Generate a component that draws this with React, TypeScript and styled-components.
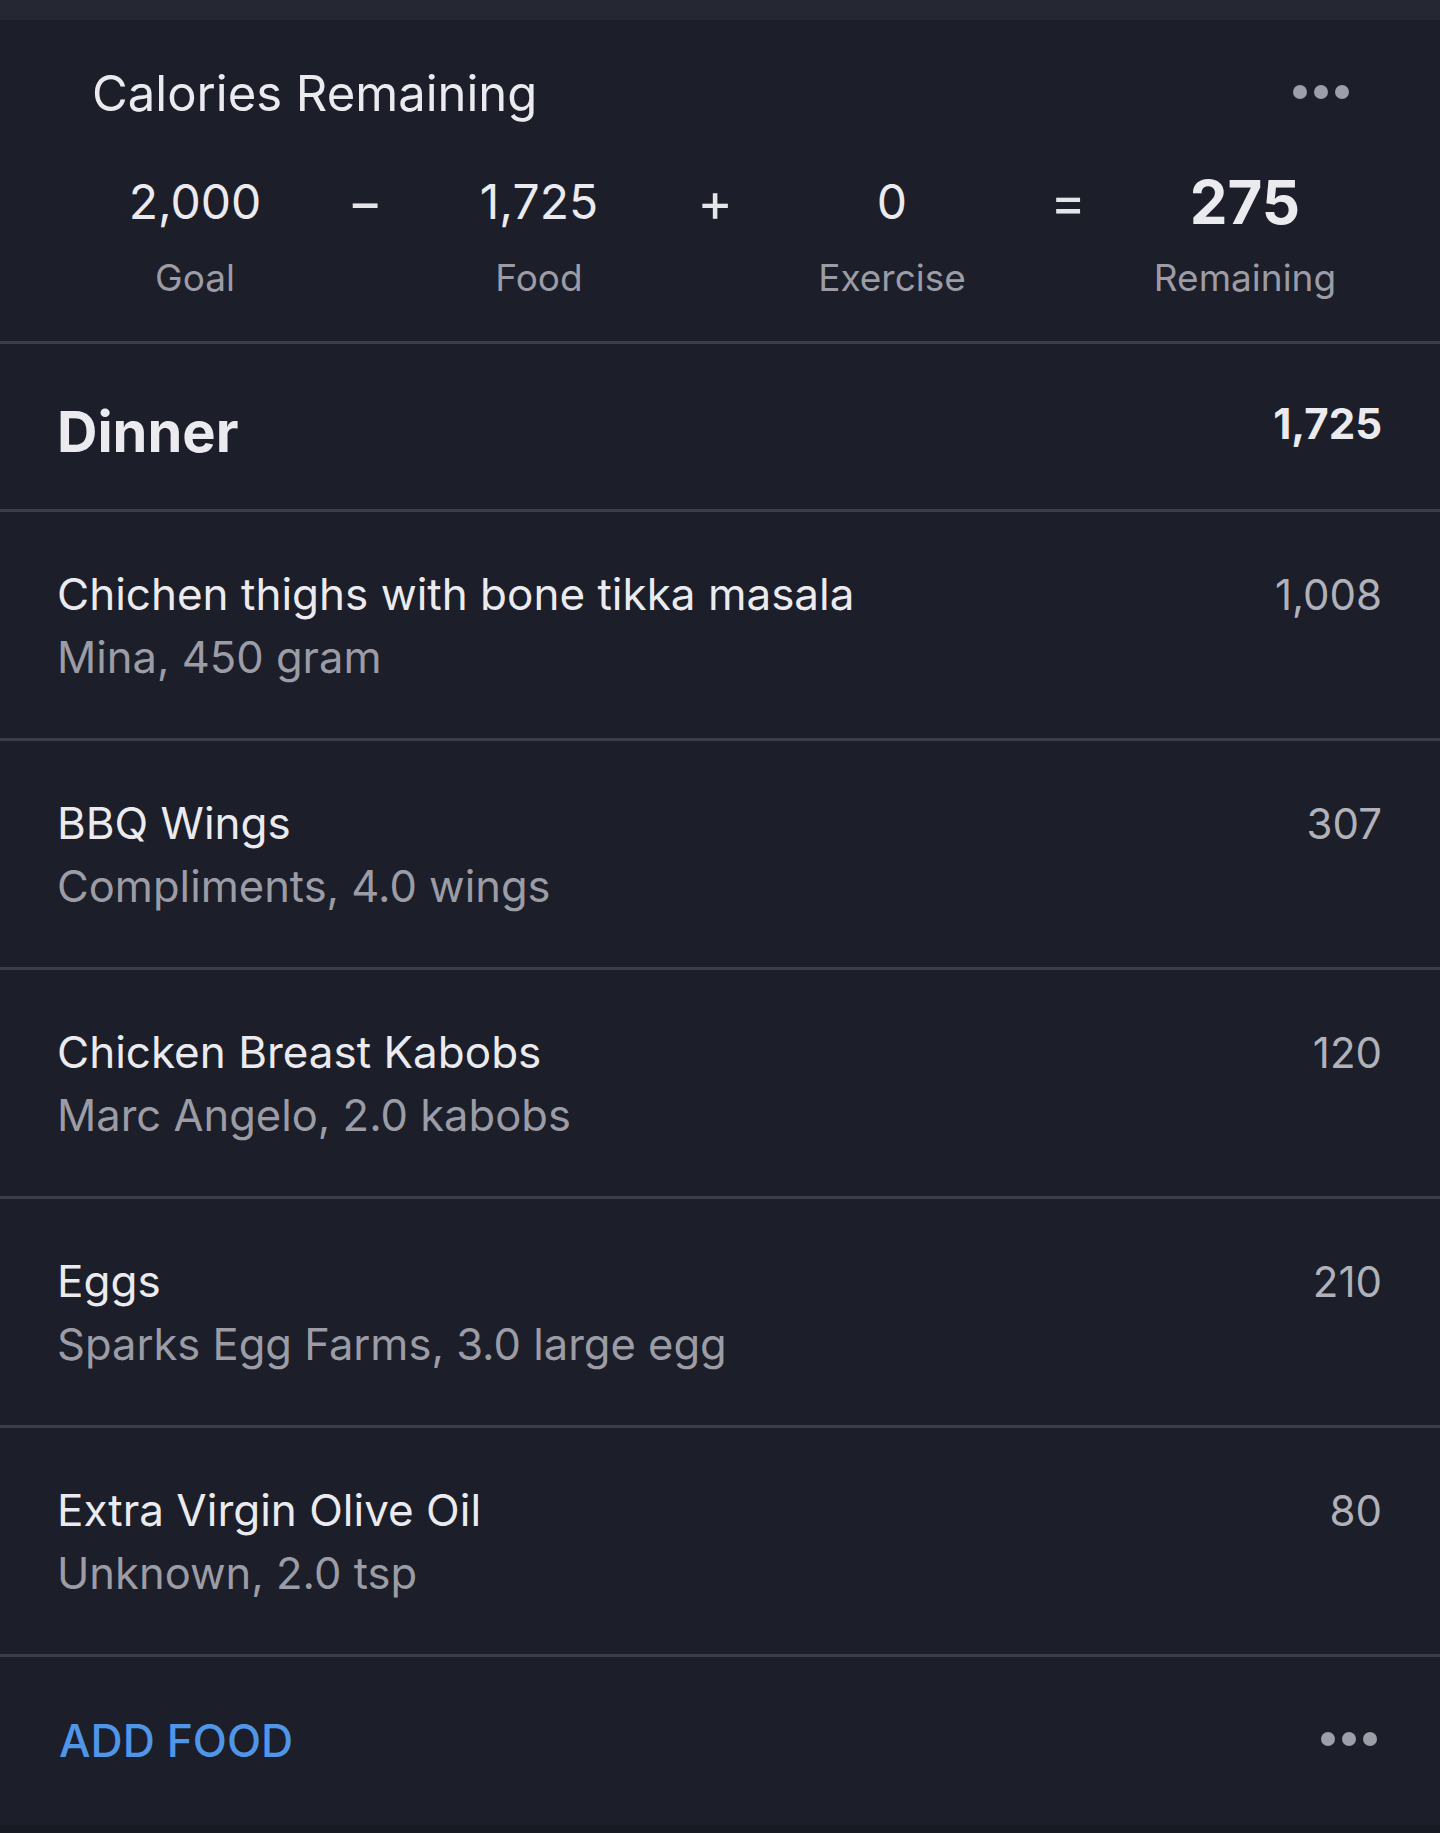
import React from 'react';
import styled, { createGlobalStyle } from 'styled-components';

interface IFoodItem {
  name: string;
  detail: string;
  calories: string;
}

const foods: IFoodItem[] = [
  { name: 'Chichen thighs with bone tikka masala', detail: 'Mina, 450 gram', calories: '1,008' },
  { name: 'BBQ Wings', detail: 'Compliments, 4.0 wings', calories: '307' },
  { name: 'Chicken Breast Kabobs', detail: 'Marc Angelo, 2.0 kabobs', calories: '120' },
  { name: 'Eggs', detail: 'Sparks Egg Farms, 3.0 large egg', calories: '210' },
  { name: 'Extra Virgin Olive Oil', detail: 'Unknown, 2.0 tsp', calories: '80' }
];

const GlobalStyle = createGlobalStyle`
  html, body {
    margin: 0;
    padding: 0;
    background: #1c1e29;
  }

  body {
    font-family: Inter, "Noto Sans", "Liberation Sans", sans-serif;
    color: #ebebef;
    -webkit-font-smoothing: antialiased;
  }
`;

const MoreDots: React.FunctionComponent = () => (
  <Dots>
    <Dot />
    <Dot />
    <Dot />
  </Dots>
);

const App: React.FunctionComponent = () => {
  const foodRows = foods.map((food, idx) => {
    return (
      <FoodRow key={idx}>
        <FoodText>
          <FoodName>{food.name}</FoodName>
          <FoodDetail>{food.detail}</FoodDetail>
        </FoodText>
        <FoodCalories>{food.calories}</FoodCalories>
      </FoodRow>
    );
  });

  return (
    <Page>
      <GlobalStyle />
      <TopStrip />
      <Summary>
        <SummaryHeader>
          <SummaryTitle>Calories Remaining</SummaryTitle>
          <MoreDots />
        </SummaryHeader>
        <Equation>
          <Term>
            <TermValue>2,000</TermValue>
            <TermLabel>Goal</TermLabel>
          </Term>
          <Operator>−</Operator>
          <Term>
            <TermValue>1,725</TermValue>
            <TermLabel>Food</TermLabel>
          </Term>
          <Operator>+</Operator>
          <Term>
            <TermValue>0</TermValue>
            <TermLabel>Exercise</TermLabel>
          </Term>
          <Operator>=</Operator>
          <Term>
            <TermValue bold>275</TermValue>
            <TermLabel>Remaining</TermLabel>
          </Term>
        </Equation>
      </Summary>
      <MealHeader>
        <MealName>Dinner</MealName>
        <MealTotal>1,725</MealTotal>
      </MealHeader>
      {foodRows}
      <Footer>
        <AddFood>ADD FOOD</AddFood>
        <MoreDots />
      </Footer>
      <BottomStrip />
    </Page>
  );
};

export default App;

const Page = styled.div`
  display: flex;
  flex-direction: column;
  width: 1440px;
  min-height: 1833px;
  background: #1c1e29;
`;

const TopStrip = styled.div`
  height: 20px;
  background: #252733;
`;

const BottomStrip = styled.div`
  flex: 1 0 auto;
  min-height: 11px;
  background: #181a23;
`;

const Summary = styled.section`
  padding: 50px 91px 41px 92px;
  border-bottom: 3px solid #3b3d49;
`;

const SummaryHeader = styled.div`
  display: flex;
  align-items: center;
  justify-content: space-between;
  height: 48px;
`;

const SummaryTitle = styled.h2`
  margin: 0;
  font-size: 49px;
  line-height: 48px;
  font-weight: 400;
  color: #ebebef;
`;

const Dots = styled.div`
  display: flex;
  gap: 7px;
  margin-bottom: 5px;
`;

const Dot = styled.span`
  width: 14px;
  height: 14px;
  border-radius: 50%;
  background: #9d9ea7;
`;

const Equation = styled.div`
  display: grid;
  grid-template-columns: 200px 140px 208px 144px 210px 142px 212px;
  margin: 60px 0 0 3px;
`;

const Term = styled.div`
  display: flex;
  flex-direction: column;
  align-items: center;
`;

const TermValue = styled.div<{ bold?: boolean }>`
  font-size: ${({ bold }) => (bold ? '60px' : '48px')};
  font-weight: ${({ bold }) => (bold ? 700 : 400)};
  line-height: 48px;
  color: #ebebef;
`;

const TermLabel = styled.div`
  margin-top: 30px;
  font-size: 37px;
  line-height: 44px;
  color: #9b9ca5;
`;

const Operator = styled.div`
  text-align: center;
  font-size: 54px;
  line-height: 48px;
  color: #e4e4e9;
`;

const MealHeader = styled.div`
  display: flex;
  align-items: flex-start;
  justify-content: space-between;
  padding: 60px 58px 49px 57px;
  border-bottom: 3px solid #3b3d49;
`;

const MealName = styled.h3`
  margin: 0;
  font-size: 56px;
  line-height: 56px;
  font-weight: 700;
  color: #ebebef;
`;

const MealTotal = styled.div`
  font-size: 42px;
  line-height: 40px;
  font-weight: 700;
  color: #ebebef;
`;

const FoodRow = styled.div`
  display: flex;
  align-items: flex-start;
  justify-content: space-between;
  padding: 51px 58px 49px 57px;
  border-bottom: 3px solid #3b3d49;
`;

const FoodText = styled.div`
  display: flex;
  flex-direction: column;
`;

const FoodName = styled.div`
  font-size: 44px;
  line-height: 63px;
  color: #ebebef;
`;

const FoodDetail = styled.div`
  font-size: 43.5px;
  line-height: 63px;
  color: #9b9ca5;
`;

const FoodCalories = styled.div`
  font-size: 42px;
  line-height: 63px;
  color: #b0b1b9;
`;

const Footer = styled.div`
  display: flex;
  align-items: center;
  justify-content: space-between;
  height: 168px;
  padding: 0 63px 0 59px;
`;

const AddFood = styled.button`
  padding: 0;
  border: none;
  background: none;
  font-family: inherit;
  font-size: 44.5px;
  line-height: 48px;
  font-weight: 500;
  color: #4f95e8;
  cursor: pointer;
`;
